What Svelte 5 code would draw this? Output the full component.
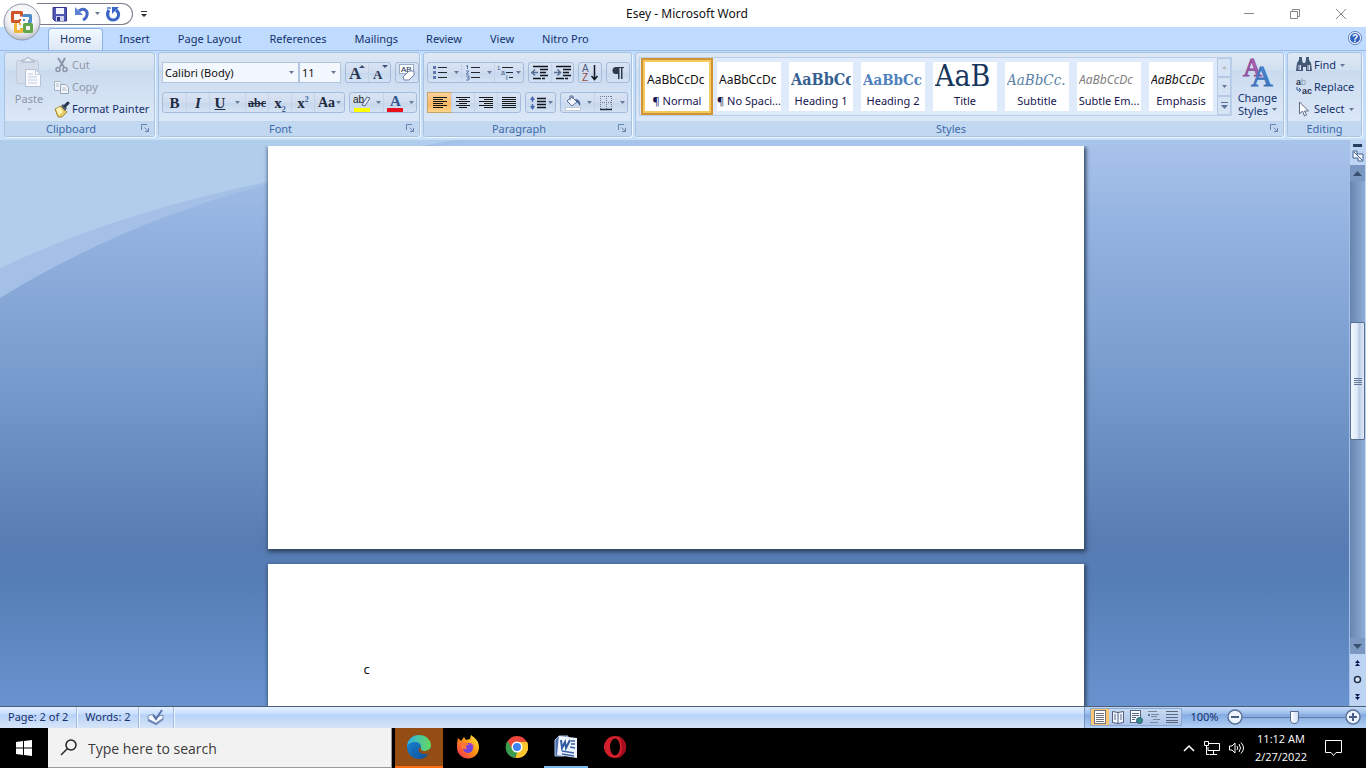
<script>
  const tabs = ['Home', 'Insert', 'Page Layout', 'References', 'Mailings', 'Review', 'View', 'Nitro Pro'];
  const styles = [
    { name: '¶ Normal', sample: 'AaBbCcDc', look: 'plain' },
    { name: '¶ No Spaci...', sample: 'AaBbCcDc', look: 'plain' },
    { name: 'Heading 1', sample: 'AaBbCc', look: 'h1' },
    { name: 'Heading 2', sample: 'AaBbCc', look: 'h2' },
    { name: 'Title', sample: 'AaB', look: 'big' },
    { name: 'Subtitle', sample: 'AaBbCc.', look: 'sub' },
    { name: 'Subtle Em...', sample: 'AaBbCcDc', look: 'subtle' },
    { name: 'Emphasis', sample: 'AaBbCcDc', look: 'emph' }
  ];
  const aligns = ['left', 'center', 'right', 'justify'];
  const views = ['print', 'reading', 'web', 'outline', 'draft'];
  const apps = ['Edge', 'Firefox', 'Chrome', 'Word', 'Opera'];

  let activeTab = 'Home';
  let activeStyle = 0;
  let align = 'left';
  let view = 'print';
  let font = 'Calibri (Body)';
  let size = '11';
  let zoom = 100;
  let query = '';
</script>

{#snippet arrow()}
  <svg class="arrow" width="5" height="3" viewBox="0 0 5 3"><path d="M0 0h5L2.5 3z" fill="currentColor" /></svg>
{/snippet}

{#snippet launcher(name)}
  <button class="launcher" aria-label="{name} options">
    <svg width="9" height="9" viewBox="0 0 9 9" fill="none" stroke="#6785ad"><path d="M.5 6V.5H6M3.5 3.5l4 4M7.5 4v3.5H4" /></svg>
  </button>
{/snippet}

{#snippet icon(name)}
  <svg class="icon" width="18" height="16" viewBox="0 0 18 16" fill="none">
    {#if name === 'save'}
      <path d="M2 1.500h13.500V15H4l-2-2z" fill="#5058b4" stroke="#30368c" />
      <path d="M5 2h8v6H5z" fill="#f3f6ff" /><path d="M5 10h8v5H5z" fill="#cdd2e8" /><path d="M6 11h3v4H6z" fill="#30368c" />
    {:else if name === 'undo'}
      <path d="M6 5c5-4 9 0 8 4-.4 2-2 4-4 5" stroke="#4468c4" stroke-width="3" /><path d="M2 1v8h8z" fill="#5d82d8" />
    {:else if name === 'redo'}
      <path d="M5 4C2 8 4 14 9 14s8-6 3-10" stroke="#3b66c6" stroke-width="3" /><path d="M8 1h7l-7 7z" fill="#3b66c6" /><path d="M3 2h4" stroke="#7899dd" stroke-width="2" />
    {:else if name === 'cut'}
      <path d="M5 1l6 9M12 1L7 10" stroke="#8b97a8" stroke-width="2" /><circle cx="5" cy="12.500" r="2" stroke="#8b97a8" stroke-width="1.500" /><circle cx="12" cy="12.500" r="2" stroke="#8b97a8" stroke-width="1.500" />
    {:else if name === 'copy'}
      <path d="M1.500 2.500h5l2 2v7h-7z" fill="#f2f5fa" stroke="#a6b2c5" /><path d="M7.500 5.500h5l3 3v6h-8z" fill="#f2f5fa" stroke="#97a5bb" /><path d="M9 9h4M9 11h5M3 5h3M3 7h3" stroke="#b2bdcd" />
    {:else if name === 'painter'}
      <path d="M2 8l6-3 6 6-5 5H5z" fill="#e3cc62" stroke="#a08a42" /><path d="M3 8l4-2 3 5-4 3z" fill="#fff6b5" /><path d="M8 5l2-2 4 4-2 3z" fill="#525c6c" /><path d="M12 5l3-3" stroke="#26354f" stroke-width="3" stroke-linecap="round" />
    {:else if name === 'grow'}
      <text x="1" y="14" class="serif" font-size="17" fill="#293754">A</text><path d="M11 3h6l-3-3z" fill="#3a5078" />
    {:else if name === 'shrink'}
      <text x="2" y="14" class="serif" font-size="13" fill="#293754">A</text><path d="M11 0h6l-3 3z" fill="#3a5078" />
    {:else if name === 'clear'}
      <rect x="1.500" y="-.5" width="14" height="9" fill="#f7faff" stroke="#9aabc5" /><text x="3" y="7" class="sans" font-size="8" fill="#222e48">AB</text>
      <path d="M5 12l6-6h5v4l-5 5H6z" fill="#fff" stroke="#7283a5" />
    {:else if name === 'bullets'}
      <path d="M2 1h3v3H2zM2 6h3v3H2zM2 11h3v3H2z" fill="#5f78ad" /><path d="M7 2.500h9M7 7.500h9M7 12.500h9" stroke="#22262f" />
    {:else if name === 'numbering'}
      <path d="M3.500 0v4M2 1h2M2 6h3L2 9h3M2 11h3v4H2M3 13h2" stroke="#5f78ad" /><path d="M7 2.500h9M7 7.500h9M7 12.500h9" stroke="#22262f" />
    {:else if name === 'multilevel'}
      <text x="0" y="5" class="sans" font-size="6" fill="#34508e">1</text><text x="4" y="10" class="sans" font-size="7" fill="#34508e">a</text><text x="9" y="15" class="sans" font-size="7" fill="#34508e">i</text>
      <path d="M5 2.500h11M9 7.500h7M12 12.500h4" stroke="#22262f" />
    {:else if name === 'outdent' || name === 'indent'}
      <path d="M2 1.500h15M2 13.500h8M9 4.500h8M9 7.500h6M9 10.500h8M11 13.500h3" stroke="#11151e" stroke-width="1.500" />
      {#if name === 'outdent'}<path d="M0 7.500h7M4 4.500L1 7.500l3 3" stroke="#5b6f95" stroke-width="1.500" />
      {:else}<path d="M0 7.500h7M3.500 4.500l3 3-3 3" stroke="#5b6f95" stroke-width="1.500" />{/if}
    {:else if name === 'sort'}
      <text x="1" y="7" class="sans" font-size="10" fill="#4e5d78">A</text><text x="1" y="16" class="sans" font-size="10" fill="#984840">Z</text><path d="M13.500 0v14M10.500 11l3 3.500 3-3.500" stroke="#11151e" stroke-width="1.500" />
    {:else if name === 'pilcrow'}
      <path d="M10 2H7a3.500 3.500 0 000 7h2v5h1.500V3H12v11h1.500V3H15V2z" fill="#303a4e" />
    {:else if name === 'left'}
      <path d="M2 2.500h14M2 4.500h10M2 6.500h14M2 8.500h10M2 10.500h14M2 12.500h10" stroke="#161616" />
    {:else if name === 'center'}
      <path d="M2 2.500h14M5 4.500h8M2 6.500h14M5 8.500h8M2 10.500h14M5 12.500h8" stroke="#161616" />
    {:else if name === 'right'}
      <path d="M2 2.500h14M7 4.500h9M2 6.500h14M7 8.500h9M2 10.500h14M7 12.500h9" stroke="#161616" />
    {:else if name === 'justify'}
      <path d="M2 2.500h14M2 4.500h14M2 6.500h14M2 8.500h14M2 10.500h14M2 12.500h14" stroke="#161616" />
    {:else if name === 'spacing'}
      <path d="M3.500 3v10" stroke="#4667aa" stroke-dasharray="4 2" stroke-width="1.500" /><path d="M1 5l2.500-4L6 5zM1 11l2.500 4L6 11z" fill="#4667aa" /><path d="M8 3.500h9M8 6.500h9M8 9.500h9M8 12.500h9" stroke="#11151e" stroke-width="1.500" />
    {:else if name === 'shading'}
      <path d="M3 6l5-4 5 5-5 4z" fill="#f4f7ff" stroke="#5b7099" /><path d="M6 5V1h3v3" stroke="#5b7099" /><path d="M11 4c4 0 6 3 5 7l-3-4z" fill="#46639c" /><rect x="1.500" y="12.500" width="15" height="3" fill="#fff" stroke="#c2cbd9" />
    {:else if name === 'borders'}
      <path d="M3 1.500h12M3 7.500h12M3.500 1v13M9.500 1v13M14.500 1v13" stroke="#6f7d94" stroke-dasharray="1 1" /><path d="M3 14.500h12" stroke="#222c40" stroke-width="1.500" />
    {:else if name === 'find'}
      <path d="M2 6l2-3h3l1 3h2l1-3h3l2 3 1 8h-6v-4H8v4H1z" fill="#445878" /><path d="M4 0h3v3H4zM11 0h3v3h-3z" fill="#445878" /><path d="M3 8h3v5H3zM12 8h3v5h-3z" fill="#d7e2f3" /><path d="M4 8v5M13 8v5" stroke="#445878" />
    {:else if name === 'replace'}
      <text x="1" y="6" class="sans" font-size="9" font-weight="bold" fill="#2c3852">a</text><text x="6" y="6" class="sans" font-size="9" fill="#8d9aae">b</text><text x="7" y="15" class="sans" font-size="9" font-weight="bold" fill="#2c3852">ac</text><path d="M2 8v3h3M4 9l2 2-2 2" stroke="#3a5a94" />
    {:else if name === 'select'}
      <path d="M4.500 1v12l3-3 2 5 2-1-2-4h4z" fill="#fff" stroke="#606c80" />
    {:else if name === 'print'}
      <rect x="3.500" y="1.500" width="11" height="13" fill="#fff" stroke="#6f7480" /><path d="M5 4.500h8M5 6.500h8M5 8.500h8M5 10.500h8M5 12.500h8" stroke="#6b7078" />
    {:else if name === 'reading'}
      <path d="M3.500 2.500l5.500 1 5.500-1v11l-5.500 1-5.500-1zM9 3v12" fill="#f4f8ff" stroke="#4f6080" /><path d="M5 6h2M5 8h2M5 10h2M11 6h2M11 8h2M11 10h2" stroke="#566683" />
    {:else if name === 'web'}
      <rect x="3.500" y="1.500" width="10" height="12" fill="#f8fbff" stroke="#53647c" /><path d="M5 4.500h7M5 6.500h7M5 8.500h4M5 10.500h3" stroke="#53647c" /><circle cx="12.500" cy="11.500" r="3" fill="#368b82" stroke="#2a5c7c" />
    {:else if name === 'outline'}
      <path d="M3 2.500h9M6 5.500h8M6 7.500h6M8 10.500h7M5 13.500h8" stroke="#7a879b" /><path d="M3 5h2v2H3z" fill="#66758e" />
    {:else if name === 'draft'}
      <path d="M3 2.500h12M3 5.500h12M3 8.500h12M3 11.500h12M3 13.500h12" stroke="#59687f" />
    {:else if name === 'proof'}
      <path d="M1 7l5-2 3 3 7-2v4l-7 5-8-5z" fill="#f5f8ff" stroke="#7890bb" /><path d="M1 11l8 4 7-5" stroke="#7088b5" stroke-width="2" /><path d="M6 6l3 4 6-9" stroke="#5a75ac" stroke-width="2" />
    {/if}
  </svg>
{/snippet}

{#snippet appIcon(name)}
  <svg width="24" height="24" viewBox="0 0 24 24" fill="none">
    {#if name === 'Edge'}
      <defs>
        <linearGradient id="edgeTop" x1="0" y1="0" x2="1" y2="0"><stop offset="0" stop-color="#2bb2e6" /><stop offset="1" stop-color="#67d85a" /></linearGradient>
        <linearGradient id="edgeLow" x1="0" y1="0" x2="1" y2="1"><stop offset="0" stop-color="#1b8bdb" /><stop offset="1" stop-color="#0c4a91" /></linearGradient>
      </defs>
      <circle cx="12" cy="12" r="12" fill="url(#edgeLow)" />
      <path d="M0 11C1 4 6 0 12 0c7 0 12 5 12 10 0 4-3 6-6 6-4 0-5-2-4-4 0-6-10-7-14-1z" fill="url(#edgeTop)" />
      <path d="M14 12c-1 2 0 4 4 4 2 0 4-1 6-3v4c-2 2-4 3-7 2-6 0-7-6-3-7z" fill="#944e14" />
      <path d="M9 10c-4 5-1 12 6 13-8 1-13-7-6-13z" fill="#1464b1" />
    {:else if name === 'Firefox'}
      <defs><linearGradient id="fox" x1="1" y1="0" x2="0" y2="1"><stop offset="0" stop-color="#fff14d" /><stop offset=".45" stop-color="#ff980e" /><stop offset="1" stop-color="#f0235d" /></linearGradient></defs>
      <path d="M2 3l3 3 3-4 2 3 4-1 1-4c4 3 8 6 8 12a11 11 0 01-22 1c0-4 0-6 1-10z" fill="url(#fox)" />
      <circle cx="12" cy="13" r="5" fill="#7542dc" /><path d="M4 8c4-2 8 0 9 2-3 0-4 2-2 4-4 1-6-2-7-6z" fill="#ff7739" /><path d="M13 8c3 0 5 2 5 5-1-2-3-2-5-5z" fill="#b842be" />
    {:else if name === 'Chrome'}
      <circle cx="12" cy="12" r="11" fill="#e9483a" /><path d="M12 12h11a11 11 0 01-12 11z" fill="#fbc52c" /><path d="M22 7H12v5l-1 11A11 11 0 0023 12c0-2 0-4-1-5z" fill="#fbc52c" />
      <path d="M2.500 6L8 15l5 1-3 7C2 22-2 13 2.500 6z" fill="#3a9d4e" /><circle cx="12" cy="12" r="5.500" fill="#fff" /><circle cx="12" cy="12" r="4" fill="#3f83ef" />
    {:else if name === 'Word'}
      <path d="M1 5l4-4h9l-4 20H1z" fill="#4e70ac" stroke="#a9c1e8" /><path d="M5 1l18 2v20L3 20z" fill="#eef4ff" /><path d="M5 3l9 1-1 11-9-1z" fill="#f5f8ff" />
      <path d="M7 5l1 8 3-6 1 6 4-8" stroke="#315aa2" stroke-width="2" /><path d="M17 6h4M17 9h4M16 12l5 1M8 16l12 2M8 19l12 2" stroke="#3c62a5" stroke-width="1.500" />
    {:else}
      <circle cx="12" cy="12" r="11" fill="#d4202c" /><ellipse cx="12" cy="12" rx="5" ry="8.500" fill="#000" /><path d="M15 1c11 4 11 18 0 22 5-6 5-16 0-22z" fill="#a50e1d" />
    {/if}
  </svg>
{/snippet}

<div class="window">
  <header class="titlebar">
    <button class="orb" aria-label="Office Button">
      <svg width="38" height="38" viewBox="0 0 38 38" fill="none">
        <defs><radialGradient id="orb" cx=".5" cy=".35" r=".65"><stop offset="0" stop-color="#fff" /><stop offset=".65" stop-color="#f0f1f4" /><stop offset="1" stop-color="#b9bec9" /></radialGradient></defs>
        <circle cx="19" cy="19" r="18" fill="url(#orb)" stroke="#8e98ac" />
        <path d="M17 18.500H9.500v-9h9v4" stroke="#cf5426" stroke-width="3" stroke-linejoin="round" />
        <path d="M21 14v-1.500h6.500v6H25" stroke="#528cc8" stroke-width="3" stroke-linejoin="round" />
        <path d="M14 21.500h-1.500v7h6V25" stroke="#f3b536" stroke-width="3" stroke-linejoin="round" />
        <path d="M21.500 21.500h7v7h-7z" stroke="#63a64a" stroke-width="3" stroke-linejoin="round" />
        <path d="M16 16h2v2h-2z" fill="#d35128" /><path d="M20 16h2v2h-2z" fill="#528cc8" /><path d="M16 20h2v2h-2z" fill="#f3b536" />
      </svg>
    </button>
    <div class="quick">
      <button aria-label="Save">{@render icon('save')}</button>
      <button aria-label="Undo">{@render icon('undo')}</button>
      <button aria-label="Undo list">{@render arrow()}</button>
      <button aria-label="Repeat">{@render icon('redo')}</button>
    </div>
    <button class="customize" aria-label="Customize Quick Access Toolbar">
      <svg width="6" height="6" viewBox="0 0 6 6"><path d="M0 0h6v1H0zM0 3h6L3 6z" fill="#333" /></svg>
    </button>
    <h1>Esey - Microsoft Word</h1>
    <div class="caption">
      <button aria-label="Minimize"><svg width="10" height="10" viewBox="0 0 10 10" stroke="#888"><path d="M0 4.500h10" /></svg></button>
      <button aria-label="Restore"><svg width="10" height="10" viewBox="0 0 10 10" fill="none" stroke="#888"><path d="M.5 2.500h7v7h-7zM2.500 2.500v-2h7v7h-2" /></svg></button>
      <button aria-label="Close"><svg width="10" height="10" viewBox="0 0 10 10" stroke="#888"><path d="M0 0l10 10M10 0L0 10" /></svg></button>
    </div>
  </header>

  <nav class="tabs">
    {#each tabs as tab}
      <button class:active={tab === activeTab} on:click={() => (activeTab = tab)}>{tab}</button>
    {/each}
    <button class="help" aria-label="Help">
      <svg width="14" height="14" viewBox="0 0 14 14"><circle cx="7" cy="7" r="6.500" fill="#fff" stroke="#557cc0" /><circle cx="7" cy="7" r="5" fill="#2e63c1" /><text x="4" y="11" class="sans" font-size="10" font-weight="bold" fill="#fff">?</text></svg>
    </button>
  </nav>

  <div class="ribbon">
    <section class="group clipboard">
      <div class="body">
        <button class="large off">
          <svg width="30" height="32" viewBox="0 0 30 32" fill="none">
            <rect x="2.500" y="3.500" width="22" height="23" rx="2" fill="#d3dceb" stroke="#c0cbdc" /><path d="M8 5h12V3h-3c0-3-6-3-6 0H8z" fill="#edf1f8" stroke="#9da9bd" />
            <path d="M11.500 12.500h10l5 5v12h-15z" fill="#f8faff" stroke="#b7c2d4" /><path d="M21.500 12.500v5h5M14 17h5M14 20h9M14 23h9M14 26h9" stroke="#c3ccda" />
          </svg>
          <span>Paste</span>
          {@render arrow()}
        </button>
        <div class="stack">
          <button class="off">{@render icon('cut')}Cut</button>
          <button class="off">{@render icon('copy')}Copy</button>
          <button>{@render icon('painter')}Format Painter</button>
        </div>
      </div>
      <footer><span>Clipboard</span>{@render launcher('Clipboard')}</footer>
    </section>

    <section class="group font">
      <div class="body rows">
        <div class="row">
          <div class="combos">
            <label class="combo name"><select aria-label="Font" bind:value={font}><option>Calibri (Body)</option><option>Cambria (Headings)</option></select>{@render arrow()}</label>
            <label class="combo size"><select aria-label="Font size" bind:value={size}><option>11</option><option>12</option></select>{@render arrow()}</label>
          </div>
          <div class="set">
            <button class="tool" aria-label="Grow Font">{@render icon('grow')}</button>
            <button class="tool" aria-label="Shrink Font">{@render icon('shrink')}</button>
          </div>
          <div class="set"><button class="tool" aria-label="Clear Formatting">{@render icon('clear')}</button></div>
        </div>
        <div class="row">
          <div class="set letters">
            <button class="tool"><b>B</b></button>
            <button class="tool"><i>I</i></button>
            <button class="tool split"><u>U</u>{@render arrow()}</button>
            <button class="tool"><s>abc</s></button>
            <button class="tool"><span>x<sub>2</sub></span></button>
            <button class="tool"><span>x<sup>2</sup></span></button>
            <button class="tool case">Aa{@render arrow()}</button>
          </div>
          <div class="set">
            <button class="tool wide" aria-label="Text Highlight Color">
              <svg width="18" height="18" viewBox="0 0 18 18"><path d="M1 14h16v4H1z" fill="#ff0" /><text x="0" y="9" class="sans" font-size="10" fill="#222">ab</text><path d="M9 11l5-8 3 1-5 8z" fill="#e7edf7" stroke="#596a88" /></svg>
              {@render arrow()}
            </button>
            <button class="tool wide" aria-label="Font Color">
              <svg width="18" height="18" viewBox="0 0 18 18"><path d="M1 14h16v4H1z" fill="#e8101c" /><text x="4" y="12" class="serif" font-size="15" fill="#34568f">A</text></svg>
              {@render arrow()}
            </button>
          </div>
        </div>
      </div>
      <footer><span>Font</span>{@render launcher('Font')}</footer>
    </section>

    <section class="group paragraph">
      <div class="body rows">
        <div class="row">
          <div class="set">
            <button class="tool wide" aria-label="Bullets">{@render icon('bullets')}{@render arrow()}</button>
            <button class="tool wide" aria-label="Numbering">{@render icon('numbering')}{@render arrow()}</button>
            <button class="tool snug" aria-label="Multilevel List">{@render icon('multilevel')}{@render arrow()}</button>
          </div>
          <div class="set">
            <button class="tool" aria-label="Decrease Indent">{@render icon('outdent')}</button>
            <button class="tool" aria-label="Increase Indent">{@render icon('indent')}</button>
          </div>
          <div class="set"><button class="tool" aria-label="Sort">{@render icon('sort')}</button></div>
          <div class="set"><button class="tool" aria-label="Show marks">{@render icon('pilcrow')}</button></div>
        </div>
        <div class="row">
          <div class="set aligns">
            {#each aligns as a}
              <button class="tool" class:on={align === a} aria-label="Align {a}" on:click={() => (align = a)}>{@render icon(a)}</button>
            {/each}
          </div>
          <div class="set"><button class="tool snug" aria-label="Line spacing">{@render icon('spacing')}{@render arrow()}</button></div>
          <div class="set">
            <button class="tool wide" aria-label="Shading">{@render icon('shading')}{@render arrow()}</button>
            <button class="tool wide" aria-label="Borders">{@render icon('borders')}{@render arrow()}</button>
          </div>
        </div>
      </div>
      <footer><span>Paragraph</span>{@render launcher('Paragraph')}</footer>
    </section>

    <section class="group styles">
      <div class="body">
        <div class="gallery">
          {#each styles as style, i}
            <button class="style" class:picked={i === activeStyle} on:click={() => (activeStyle = i)}>
              <span class="sample {style.look}">{style.sample}</span>
              <span class="name">{style.name}</span>
            </button>
          {/each}
          <div class="scroller">
            <button class="off" aria-label="Row up"><svg width="5" height="3" viewBox="0 0 5 3"><path d="M0 3h5L2.500 0z" fill="#b8b8b8" /></svg></button>
            <button aria-label="Row down">{@render arrow()}</button>
            <button aria-label="More styles"><svg width="7" height="7" viewBox="0 0 7 7"><path d="M0 0h7v1H0zM0 3h7L3.500 7z" fill="#5a7398" /></svg></button>
          </div>
        </div>
        <button class="large change">
          <svg width="30" height="32" viewBox="0 0 30 32">
            <defs>
              <linearGradient id="pinkA" x1="0" y1="0" x2="0" y2="1"><stop offset="0" stop-color="#d468b8" /><stop offset="1" stop-color="#8d62b4" /></linearGradient>
              <linearGradient id="blueA" x1="0" y1="0" x2="0" y2="1"><stop offset="0" stop-color="#63a5ea" /><stop offset="1" stop-color="#2c62b0" /></linearGradient>
            </defs>
            <text x="0" y="19" class="tall" font-size="26" fill="url(#pinkA)" stroke="#8f4f9c">A</text>
            <text x="8" y="29" class="tall" font-size="30" fill="url(#blueA)" stroke="#3f74bd">A</text>
          </svg>
          <span>Change</span>
          <span>Styles {@render arrow()}</span>
        </button>
      </div>
      <footer><span>Styles</span>{@render launcher('Styles')}</footer>
    </section>

    <section class="group editing">
      <div class="body">
        <div class="stack">
          <button>{@render icon('find')}Find {@render arrow()}</button>
          <button>{@render icon('replace')}Replace</button>
          <button>{@render icon('select')}Select {@render arrow()}</button>
        </div>
      </div>
      <footer><span>Editing</span></footer>
    </section>
  </div>

  <main class="workspace">
    <svg class="swoosh" width="480" height="170" viewBox="0 0 480 170" fill="none">
      <path d="M0 0h470Q370 18 267 44Q120 84 0 158z" fill="#a4c0e6" />
      <path d="M0 0h456Q350 18 267 42Q120 72 0 128z" fill="#b0cdec" />
    </svg>
    <div class="canvas">
      <article class="page previous"></article>
      <article class="page current"><p>c</p></article>
    </div>
    <aside class="scrollbar">
      <button class="splitter" aria-label="Split"></button>
      <button class="ruler" aria-label="View Ruler"><svg width="12" height="12" viewBox="0 0 12 12" fill="#f4f8ff" stroke="#3f608f"><path d="M1 1h4v3h6v7H6V8H1z" /><path d="M2 2l8 8" /></svg></button>
      <button class="step" aria-label="Scroll up"><svg width="9" height="5" viewBox="0 0 9 5"><path d="M0 5h9L4.500 0z" fill="#38506f" /></svg></button>
      <div class="track">
        <div class="thumb"><svg width="8" height="9" viewBox="0 0 8 9" stroke="#62779a"><path d="M0 1.500h8M0 3.500h8M0 5.500h8M0 7.500h8" /></svg></div>
      </div>
      <button class="step" aria-label="Scroll down"><svg width="9" height="5" viewBox="0 0 9 5"><path d="M0 0h9L4.500 5z" fill="#38506f" /></svg></button>
      <button class="browse" aria-label="Previous page"><svg width="7" height="8" viewBox="0 0 7 8"><path d="M1 4h5L3.500 1zM1 7h5L3.500 4z" fill="#0b1a50" /></svg></button>
      <button class="browse" aria-label="Browse object"><svg width="9" height="9" viewBox="0 0 9 9"><circle cx="4.500" cy="4.500" r="3" fill="#dbe7f7" stroke="#222f4a" stroke-width="1.500" /></svg></button>
      <button class="browse" aria-label="Next page"><svg width="7" height="8" viewBox="0 0 7 8"><path d="M1 1h5L3.500 4zM1 4h5L3.500 7z" fill="#0b1a50" /></svg></button>
    </aside>
  </main>

  <div class="status">
    <button>Page: 2 of 2</button>
    <button>Words: 2</button>
    <button aria-label="Proofing">{@render icon('proof')}</button>
    <div class="right">
      <div class="views">
        {#each views as v}
          <button class:on={view === v} aria-label="{v} view" on:click={() => (view = v)}>{@render icon(v)}</button>
        {/each}
      </div>
      <span class="percent">{zoom}%</span>
      <button class="round" aria-label="Zoom out" on:click={() => (zoom -= 10)}><svg width="16" height="16" viewBox="0 0 16 16"><circle cx="8" cy="8" r="7" fill="#edf4ff" stroke="#5c7298" stroke-width="1.500" /><path d="M4 7h8v2H4z" fill="#4a5f85" /></svg></button>
      <input type="range" min="0" max="200" bind:value={zoom} aria-label="Zoom" />
      <button class="round" aria-label="Zoom in" on:click={() => (zoom += 10)}><svg width="16" height="16" viewBox="0 0 16 16"><circle cx="8" cy="8" r="7" fill="#edf4ff" stroke="#5c7298" stroke-width="1.500" /><path d="M4 7h3V4h2v3h3v2H9v3H7V9H4z" fill="#4a5f85" /></svg></button>
    </div>
  </div>

  <div class="taskbar">
    <button class="start" aria-label="Start"><svg width="16" height="16" viewBox="0 0 16 16" fill="#fff"><path d="M0 2l7-1v6.500H0zM8 1l8-1v7.500H8zM0 8.500h7V15l-7-1zM8 8.500h8V16l-8-1z" /></svg></button>
    <label class="search">
      <svg width="17" height="17" viewBox="0 0 17 17" fill="none" stroke="#222" stroke-width="1.500"><circle cx="11" cy="6" r="5" /><path d="M7.500 9.500L1 16" /></svg>
      <input type="text" placeholder="Type here to search" aria-label="Search" bind:value={query} />
    </label>
    <div class="apps">
      {#each apps as app}
        <button class={app.toLowerCase()} aria-label={app}>{@render appIcon(app)}</button>
      {/each}
    </div>
    <div class="tray">
      <button aria-label="Hidden icons"><svg width="12" height="8" viewBox="0 0 12 8" fill="none" stroke="#fff" stroke-width="1.500"><path d="M1 7l5-5 5 5" /></svg></button>
      <button aria-label="Network"><svg width="16" height="14" viewBox="0 0 16 14" fill="none" stroke="#fff"><path d="M5 2.500h10.500v7H4V6M9.500 10v3M6 13.500h7M.5.5h4v4h-4zM2.500 4.500v9h3" /></svg></button>
      <button aria-label="Volume"><svg width="17" height="14" viewBox="0 0 17 14" fill="none" stroke="#fff"><path d="M.5 5v4h2.500l3 3V2L3 5zM8 5q1.500 2 0 4M10 3q3 4 0 8M12 1.500q5 5.500 0 11" /></svg></button>
      <button class="clock"><span>11:12 AM</span><span>2/27/2022</span></button>
      <button aria-label="Notifications"><svg width="17" height="16" viewBox="0 0 17 16" fill="none" stroke="#fff"><path d="M.5.5h16v12H11l-2.500 3-2.500-3H.5z" /></svg></button>
    </div>
  </div>
</div>

<style>
  :global(body) { margin: 0; }
  .window {
    height: 100vh; display: flex; flex-direction: column; overflow: hidden;
    font-family: "Noto Sans", "Open Sans", sans-serif; font-size: 11px; line-height: 14px; color: #15326b;
  }
  .window * { box-sizing: border-box; }
  button { border: 0; padding: 0; margin: 0; background: none; font: inherit; color: inherit; cursor: pointer; display: flex; align-items: center; justify-content: center; }
  svg { display: block; flex: none; overflow: visible; }
  .arrow { color: #66799a; }
  .serif { font-family: "Liberation Serif", serif; font-weight: bold; }
  .sans { font-family: "Liberation Sans", sans-serif; }
  .tall { font-family: "Liberation Serif", serif; }

  .titlebar { height: 27px; flex: none; display: flex; align-items: center; background: #fff; position: relative; }
  .orb { position: absolute; left: 3px; top: 3px; z-index: 2; }
  .quick { margin-left: 37px; width: 96px; height: 22px; display: flex; align-items: center; gap: 4px; padding-left: 14px; border: 1px solid #777d88; border-left: 0; border-radius: 0 12px 12px 0; }
  .customize { margin-left: 7px; width: 8px; }
  h1 { margin: 0; flex: 1; text-align: center; font-size: 12px; font-weight: normal; color: #111; }
  .caption { display: flex; margin-right: 2px; }
  .caption button { width: 46px; height: 27px; }

  .tabs { height: 23px; flex: none; display: flex; background: #bfdbff; padding: 1px 4px 0 48px; }
  .tabs button { padding: 0 14px; }
  .tabs button.active { padding: 0 11px 1px; margin-right: 2px; background: linear-gradient(#f2f8ff, #dce8f7); border: 1px solid #8db2e3; border-bottom: 0; border-radius: 4px 4px 0 0; }
  .tabs .help { margin-left: auto; padding: 0 0 3px; width: 14px; }

  .ribbon { flex: none; display: flex; gap: 3px; padding: 1px 4px 3px; background: linear-gradient(#bfdbff, #c8dff8); border-top: 1px solid #9dbbe2; }
  .group { flex: none; display: flex; flex-direction: column; height: 85px; border: 1px solid #a9c3df; border-radius: 3px; background: linear-gradient(#dde8f5 0, #d3e0f1 20%, #cbdbef 21%, #dfebfa 100%); box-shadow: 1px 1px 0 #eef6ff; }
  .clipboard { width: 151px; }
  .font { width: 262px; }
  .paragraph { width: 209px; }
  .styles { flex: 1; min-width: 0; }
  .editing { width: 75px; }
  .body { flex: 1; display: flex; padding-top: 1px; }
  .group footer { height: 15px; flex: none; display: flex; align-items: center; background: #c1d8f0; color: #3e6aaa; }
  .group footer span { flex: 1; text-align: center; }
  .launcher { width: 17px; }
  .off { color: #8f98a8; }
  .off .arrow { color: #b4bcc9; }
  .large { flex-direction: column; justify-content: flex-start; width: 48px; padding-top: 3px; }
  .large > span { display: flex; align-items: center; gap: 4px; }
  .clipboard .large { gap: 2px; }
  .clipboard .large svg { margin-bottom: 1px; }
  .stack { display: flex; flex-direction: column; align-items: flex-start; }
  .stack button { height: 22px; gap: 1px; }
  .stack .arrow { margin-left: 3px; }
  .editing .stack { padding-left: 7px; }

  .rows { flex-direction: column; padding: 9px 3px 0; gap: 9px; }
  .row { display: flex; gap: 4px; }
  .combos { display: flex; }
  .combo { position: relative; display: flex; }
  .combo select { appearance: none; width: 100%; height: 21px; border: 1px solid #b1c5df; background: #f3f8fe; color: #111; font: inherit; padding: 0 2px; border-radius: 0; }
  .combo .arrow { position: absolute; right: 5px; top: 9px; }
  .combo.name { width: 137px; }
  .combo.size { width: 42px; }
  .set { display: flex; border: 1px solid #a5bbdb; border-radius: 3px; background: linear-gradient(#d9e4f4, #d0ddf0 50%, #c6d6ec 51%, #d4e3f4); }
  .tool { width: 22px; height: 19px; gap: 2px; }
  .tool + .tool { border-left: 1px solid #c4d3e8; }
  .tool.wide { width: 33px; gap: 5px; }
  .paragraph .tool.snug { width: 29px; gap: 1px; }
  .aligns .tool { width: 23px; }
  .tool.on { background: linear-gradient(#fbd09a, #f8b865 60%, #fcd58b); outline: 1px solid #c6a56d; }
  .letters { font-family: "Liberation Serif", serif; font-size: 15px; color: #1e2940; font-weight: bold; }
  .letters .tool { width: 23px; }
  .letters .split { width: 36px; gap: 10px; }
  .letters .case { width: 30px; font-size: 14px; gap: 1px; }
  .letters s { font-size: 12px; }
  .letters sub, .letters sup { font-size: 8px; line-height: 0; color: #40619b; }

  .styles .body { padding: 4px 0 0 3px; }
  .gallery { flex: 1; display: flex; height: 59px; border: 1px solid #b9cfea; background: #dfeafa; padding-left: 1px; }
  .style { width: 72px; flex: none; flex-direction: column; justify-content: flex-start; height: 57px; border: 4px solid #dfeafa; background: #fff; overflow: hidden; color: #171551; }
  .style.picked { border-color: #f6c95f; outline: 2px solid #cf9535; outline-offset: -2px; }
  .style .sample { display: block; width: 60px; height: 30px; line-height: 36px; overflow: hidden; white-space: nowrap; text-align: left; font-size: 12px; color: #111; }
  .style .name { line-height: 20px; white-space: nowrap; }
  .style .subtle { color: #808080; font-style: italic; }
  .style .emph { font-style: italic; }
  .style .h1, .style .h2, .style .big, .style .sub { font-family: "DejaVu Serif Condensed", "DejaVu Serif", serif; }
  .style .h1 { font-size: 16px; font-weight: bold; color: #365f91; }
  .style .h2 { font-size: 15px; font-weight: bold; color: #4f81bd; }
  .style .big { font-size: 30px; line-height: 28px; color: #17365d; }
  .style .sub { font-size: 15px; font-style: italic; color: #5b7fa9; }
  .scroller { display: flex; flex-direction: column; margin-left: auto; width: 14px; }
  .scroller button { flex: 1; width: 14px; border: 1px solid #b5cae6; background: #d5e3f5; }
  .change { padding-top: 0; width: 52px; }
  .change svg:first-child { margin-bottom: 2px; }
  .change > span { line-height: 13px; }

  .workspace { flex: 1; min-height: 0; display: flex; position: relative; background: linear-gradient(#a9c4eb 0, #93b2e0 16%, #82a4d4 32%, #6e94c6 50%, #567cb3 72%, #567eb6 78%, #6993cf 100%); border-bottom: 1px solid #4d5d75; }
  .swoosh { position: absolute; left: 0; top: 0; }
  .canvas { flex: 1; display: flex; flex-direction: column; align-items: center; gap: 15px; padding: 6px 0 0 2px; position: relative; overflow: hidden; }
  .page { width: 816px; background: #fff; box-shadow: 1px 2px 4px 1px #2e445f; }
  .previous { flex: 1; clip-path: inset(0 -8px -8px -8px); }
  .current { flex: none; height: 142px; padding: 96px 96px 0; }
  .page p { margin: 0; color: #111; font-size: 13px; line-height: 19px; }

  .scrollbar { width: 17px; display: flex; flex-direction: column; align-items: center; background: #bdd4f3; border-left: 1px solid #a5c0e7; position: relative; padding: 4px 1px 1px 0; }
  .splitter { height: 3px; width: 9px; background: #24415f; }
  .ruler { height: 18px; }
  .step { height: 16px; width: 15px; background: #7a98c2; }
  .track { flex: 1; width: 15px; display: flex; flex-direction: column; background: linear-gradient(90deg, #6685b0, #8eacd5); }
  .track::before { content: ''; flex: 142; }
  .track::after { content: ''; flex: 199; }
  .thumb { flex: 117; display: flex; align-items: center; justify-content: center; border: 1px solid #596f92; border-radius: 2px; background: linear-gradient(90deg, #f3f8ff, #dce8f7 50%, #b8cae4 60%, #e1ecfb); }
  .browse { height: 17px; }

  .status { height: 21px; flex: none; display: flex; background: linear-gradient(#e2efff 0, #c9dffd 35%, #b7d2f9 36%, #d7e5f7 100%); }
  .status > button { padding: 0 8px 1px; border-right: 1px solid #9fbbe2; box-shadow: 1px 0 0 #eef5ff; }
  .right { margin-left: auto; display: flex; align-items: center; padding: 0 5px 1px; background: linear-gradient(#c2d9f7, #98bbeb 35%, #82aae2 36%, #b4d0f5); border-left: 1px solid #7895bf; }
  .views { display: flex; height: 18px; border: 1px solid #8aa7d2; background: linear-gradient(#c8daf3, #adc5e9); }
  .views button { width: 18px; }
  .views .on { background: #fbc871; }
  .percent { width: 45px; text-align: center; }
  .round { width: 16px; height: 16px; }
  .right input { appearance: none; width: 102px; height: 18px; margin: 0; background: linear-gradient(#5d7aa8, #5d7aa8) center / 100% 1px no-repeat; }
  .right input::-webkit-slider-thumb { appearance: none; width: 9px; height: 13px; border: 1px solid #5a6c8b; border-radius: 1px 1px 5px 5px; background: linear-gradient(90deg, #fff, #cfdef4); }

  .taskbar { height: 40px; flex: none; display: flex; background: #000; color: #fff; font-family: "Open Sans", "Noto Sans", sans-serif; }
  .start { width: 48px; }
  .search { width: 344px; display: flex; align-items: center; gap: 11px; padding-left: 12px; background: #f2f2f2; border: 1px solid #999; border-width: 0 1px 1px 0; }
  .search input { flex: 1; min-width: 0; padding: 1px 0 0; border: 0; outline: 0; background: none; font: inherit; font-size: 14px; color: #222; }
  .search input::placeholder { color: #3b3b3b; opacity: 1; }
  .apps { display: flex; gap: 1px; margin-left: 3px; }
  .apps button { width: 48px; border-bottom: 2px solid transparent; }
  .apps .edge { background: #944e14; border-color: #ff6d12; }
  .apps .word { border-image: linear-gradient(90deg, transparent 4px, #76b9ed 4px, #76b9ed 44px, transparent 44px) 2; }
  .tray { margin-left: auto; display: flex; align-items: center; gap: 9px; padding-right: 24px; }
  .tray button { height: 40px; }
  .clock { flex-direction: column; font-size: 11px; line-height: 18px; }
  .tray button:last-child { margin-left: 9px; }
</style>
